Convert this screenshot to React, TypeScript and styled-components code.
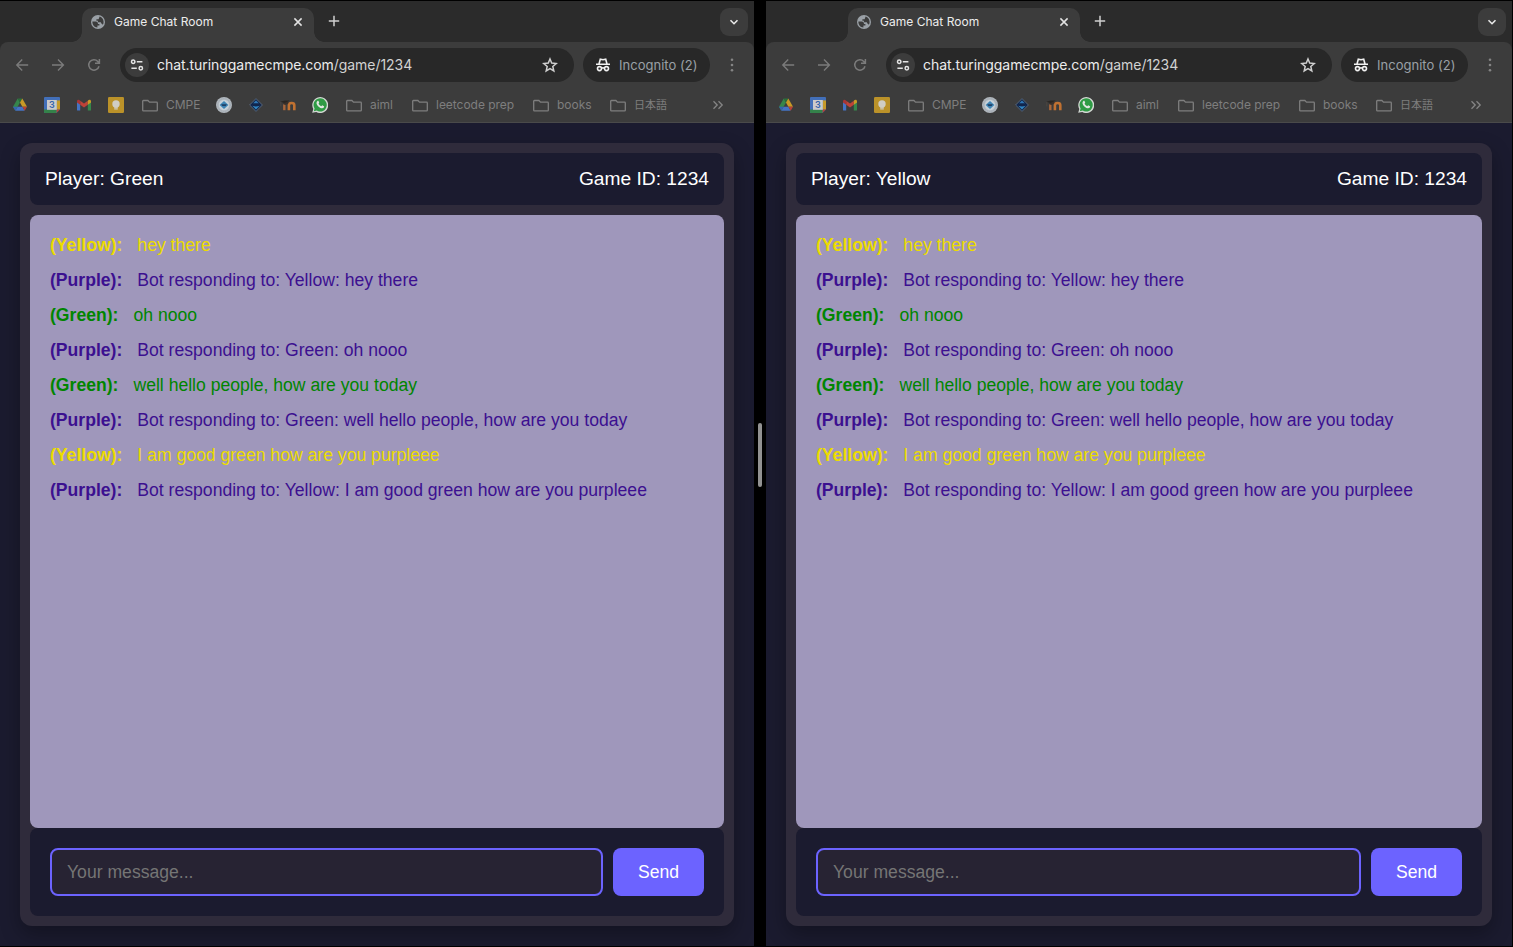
import React from 'react';
import styled, { createGlobalStyle } from 'styled-components';

const Global = createGlobalStyle`
  *, *::before, *::after { box-sizing: border-box; }
  body { margin: 0; background: #000; overflow: hidden; }
`;

const Desktop = styled.div`
  display: flex;
  width: 1513px;
  height: 947px;
  padding: 1px 1px 0 0;
  background: #000;
`;

const Divider = styled.div`
  width: 12px;
  display: flex;
  justify-content: center;
  padding-top: 422px;
`;

const Grip = styled.div`
  width: 4px;
  height: 64px;
  border-radius: 2px;
  background: #929292;
`;

const Window = styled.div<{ $width: number }>`
  width: ${(p) => p.$width}px;
  height: 945px;
  display: flex;
  flex-direction: column;
  background: #1b1b2f;
  overflow: hidden;
  font-family: Inter, 'Noto Sans CJK JP', sans-serif;
`;

const TabStrip = styled.div`
  height: 41px;
  flex: none;
  display: flex;
  padding: 7px 6px 0 82px;
  background: #2b2b2b;
`;

const Tab = styled.div`
  position: relative;
  width: 232px;
  height: 34px;
  padding: 0 10px 6px 9px;
  display: flex;
  align-items: center;
  border-radius: 10px 10px 0 0;
  background: #3c3c3c;

  &::before,
  &::after {
    content: '';
    position: absolute;
    bottom: 0;
    width: 10px;
    height: 10px;
  }
  &::before {
    left: -10px;
    background: radial-gradient(circle at 0 0, transparent 9.5px, #3c3c3c 10px);
  }
  &::after {
    right: -10px;
    background: radial-gradient(circle at 100% 0, transparent 9.5px, #3c3c3c 10px);
  }
`;

const TabTitle = styled.span`
  flex: 1;
  margin-left: 9px;
  font-size: 12px;
  line-height: 16px;
  letter-spacing: 0.02px;
  color: #ececec;
  white-space: nowrap;
`;

const NewTab = styled.div`
  flex: 1;
  padding: 7px 0 0 14px;
  svg { display: block; }
`;

const TabSearch = styled.div`
  width: 28px;
  height: 28px;
  display: grid;
  place-items: center;
  border-radius: 9px;
  background: #3c3c3c;
`;

const ToolbarBack = styled.div`
  flex: none;
  background: #2b2b2b;
`;

const Chrome = styled.div`
  height: 81px;
  border-radius: 8px 8px 0 0;
  background: #3c3c3c;
  border-bottom: 1px solid #4a4a4a;
`;

const NavRow = styled.div`
  display: flex;
  align-items: center;
  height: 46px;
  padding: 0 14px;
`;

const NavIcons = styled.div`
  display: flex;
  gap: 20px;
  width: 106px;
  svg { display: block; }
`;

const AddressBar = styled.div`
  flex: 1;
  height: 34px;
  display: flex;
  align-items: center;
  padding: 0 15px 0 5px;
  border-radius: 17px;
  background: #282828;
`;

const SiteInfo = styled.div`
  width: 24px;
  height: 24px;
  display: grid;
  place-items: center;
  border-radius: 50%;
  background: #3c3c3c;
`;

const Url = styled.span`
  flex: 1;
  margin-left: 8px;
  font-size: 14px;
  line-height: 20px;
  letter-spacing: -0.05px;
  color: #ececec;
  white-space: nowrap;
  span { color: #d2d2d2; }
`;

const IncognitoPill = styled.div`
  width: 127px;
  height: 34px;
  margin: 0 14px 0 9px;
  padding-left: 12px;
  display: flex;
  align-items: center;
  gap: 8px;
  border-radius: 17px;
  background: #282828;
  color: #9aa0a6;
  font-size: 13px;
  letter-spacing: 0.02px;
  white-space: nowrap;
`;

const Bookmarks = styled.div`
  display: flex;
  align-items: center;
  height: 34px;
  padding: 0 30px 0 12px;
`;

const Favicon = styled.div`
  width: 16px;
  height: 16px;
  margin-right: 16px;
  svg { display: block; }
`;

const Folder = styled.div<{ $width: number }>`
  width: ${(p) => p.$width}px;
  flex: none;
  display: flex;
  align-items: center;
  gap: 7px;
  padding: 0 0 1px 2px;
  font-size: 12px;
  line-height: 15px;
  letter-spacing: -0.03px;
  color: #7e7e7e;
  white-space: nowrap;
  svg { flex: none; position: relative; top: 1px; }
`;

const Japanese = styled.span`
  font: 11px/15px 'Noto Sans CJK JP', sans-serif;
`;

const More = styled.div`
  margin-left: auto;
  svg { display: block; }
`;

const Page = styled.div`
  flex: 1;
  padding: 20px 20px 20px;
  background: #1b1b2f;
  font-family: 'Liberation Sans', Arial, sans-serif;
`;

const Card = styled.div`
  height: 783px;
  display: flex;
  flex-direction: column;
  padding: 10px;
  border-radius: 12px;
  background: #2f2b3b;
  box-shadow: 0 8px 20px rgba(0, 0, 0, 0.3);
`;

const Header = styled.div`
  height: 52px;
  display: flex;
  align-items: center;
  justify-content: space-between;
  margin-bottom: 10px;
  padding: 0 15px;
  border-radius: 8px;
  background: #1b1b2f;
  color: #fff;
  font-size: 19.2px;
`;

const Messages = styled.div`
  height: 613px;
  padding: 20px;
  border-radius: 8px;
  background: #9f97bb;
`;

const Line = styled.div<{ $color: string }>`
  height: 20px;
  margin-bottom: 15px;
  font-size: 17.6px;
  line-height: 20px;
  color: ${(p) => p.$color};
  white-space: nowrap;
  strong { margin-right: 15px; }
`;

const Composer = styled.div`
  height: 88px;
  display: flex;
  gap: 10px;
  padding: 20px;
  border-radius: 8px;
  background: #1b1b2f;
`;

const Input = styled.input`
  flex: 1;
  min-width: 0;
  height: 48px;
  padding: 0 15px;
  border: 2px solid #6c63ff;
  border-radius: 8px;
  background: #272333;
  font: 17.6px 'Liberation Sans', Arial, sans-serif;
  outline: none;
  &::placeholder { color: #757575; opacity: 1; }
`;

const Send = styled.button`
  width: 91px;
  height: 48px;
  border: 0;
  border-radius: 8px;
  background: #6c63ff;
  color: #fff;
  font: 17.6px 'Liberation Sans', Arial, sans-serif;
`;

const GlobeIcon = () => (
  <svg width="14" height="14" viewBox="0 0 14 14">
    <circle cx="7" cy="7" r="7" fill="#9aa0a6" />
    <path
      d="M1.4 6.4 4.6 6.6C6.4 6.7 7 7.6 7 9H8.4V10.6H6.4V12.4C3.4 12.3 1.2 9.7 1.4 6.4ZM8.6 1.6C11 2.3 12.6 4.4 12.6 7c0 1-.2 1.9-.7 2.7L10.4 8.6 9.8 7.2H6.9V5.8H5.4V4.3H7.6Z"
      fill="#3c3c3c"
    />
  </svg>
);

const CloseIcon = () => (
  <svg width="12" height="12" viewBox="0 0 12 12" stroke="#e3e3e3" strokeWidth="1.5">
    <path d="m2.4 2.4 7.2 7.2M9.6 2.4 2.4 9.6" />
  </svg>
);

const PlusIcon = () => (
  <svg width="12" height="12" viewBox="0 0 12 12" stroke="#d0d0d0" strokeWidth="1.5">
    <path d="M6 .8v10.4M.8 6h10.4" />
  </svg>
);

const ChevronIcon = () => (
  <svg width="10" height="10" viewBox="0 0 10 10" fill="none" stroke="#e8e8e8" strokeWidth="1.6">
    <path d="m1.5 3.2 3.5 3.5 3.5-3.5" />
  </svg>
);

const ArrowIcon = ({ flip = false }: { flip?: boolean }) => (
  <svg width="16" height="16" viewBox="0 0 16 16" fill="none" stroke="#7b7b7b" strokeWidth="1.4">
    <path d={flip ? 'M2 8h11.3M8 2.6 13.4 8 8 13.4' : 'M14.2 8H2.9M8.2 2.6 2.8 8l5.4 5.4'} />
  </svg>
);

const ReloadIcon = () => (
  <svg width="16" height="16" viewBox="0 0 16 16" fill="none" stroke="#7b7b7b" strokeWidth="1.5">
    <path d="M13 9.2A5.2 5.2 0 1 1 11.8 4.4L13.3 6M13.4 2v4.3H9" />
  </svg>
);

const TuneIcon = () => (
  <svg width="14" height="14" viewBox="0 0 14 14" fill="none" stroke="#e3e3e3" strokeWidth="1.5">
    <circle cx="3.2" cy="3.7" r="1.7" />
    <path d="M6.8 3.7h5.6M1.4 10.3h5.4" />
    <circle cx="10.8" cy="10.3" r="1.7" />
  </svg>
);

const StarIcon = () => (
  <svg width="18" height="18" viewBox="0 0 18 18" fill="none" stroke="#d0d0d0" strokeWidth="1.5">
    <path d="m9 3 1.7 4.1 4.5.4-3.4 3 1 4.4L9 12.6l-3.8 2.3 1-4.4-3.4-3 4.5-.4Z" />
  </svg>
);

const IncognitoIcon = () => (
  <svg width="16" height="16" viewBox="0 0 16 16" fill="none" stroke="#f1f1f1" strokeWidth="1.6">
    <path d="M1 7.2h14M4 7 5.3 2.2 8 2.8l2.7-.6L12 7" />
    <circle cx="4.5" cy="11.6" r="2" />
    <circle cx="11.5" cy="11.6" r="2" />
    <path d="M6.5 11.2c1-.6 2-.6 3 0" />
  </svg>
);

const DotsIcon = () => (
  <svg width="16" height="16" viewBox="0 0 16 16" fill="#858585">
    <circle cx="8" cy="2.7" r="1.3" />
    <circle cx="8" cy="8" r="1.3" />
    <circle cx="8" cy="13.3" r="1.3" />
  </svg>
);

const FolderIcon = () => (
  <svg width="17" height="14" viewBox="0 0 17 14" fill="none" stroke="#7e7e7e" strokeWidth="1.3">
    <path d="M1.4 1.5h4.5L7.5 3.2h7.1q.7 0 .7.7v7.3q0 .7-.7.7H1.4q-.7 0-.7-.7V2.2q0-.7.7-.7Z" />
  </svg>
);

const MoreIcon = () => (
  <svg width="12" height="12" viewBox="0 0 12 12" fill="none" stroke="#858585" strokeWidth="1.3">
    <path d="m1.5 2.3 3.7 3.7-3.7 3.7M6.5 2.3l3.7 3.7-3.7 3.7" />
  </svg>
);

const DriveIcon = () => (
  <svg width="16" height="16" viewBox="0 0 16 16">
    <path d="M5.7 1.5 1 9.8l2.3 4L5.6 9.8 8 5.5Z" fill="#35864b" />
    <path d="M5.7 1.5h4.6L8 5.5Z" fill="#287039" />
    <path d="M10.3 1.5 15 9.8h-4.6L8 5.5Z" fill="#c99a26" />
    <path d="M3.3 13.8 5.6 9.8h4.8l2.3 4Z" fill="#4473c4" />
    <path d="M10.4 9.8H15l-2.3 4Z" fill="#b84237" />
    <path d="M1 9.8h4.6l-2.3 4Z" fill="#3564b0" />
  </svg>
);

const DayText = styled.text`
  font: 600 9px Inter, sans-serif;
  fill: #3464ad;
`;

const CalendarIcon = () => (
  <svg width="16" height="16" viewBox="0 0 16 16">
    <rect width="16" height="16" rx="1" fill="#426fb9" />
    <path d="M12.6 3.4H16v9.2h-3.4Z" fill="#c69b29" />
    <path d="M0 12.6h12.6V16H1q-1 0-1-1Z" fill="#34824a" />
    <path d="M12.6 12.6H16L12.6 16Z" fill="#b84237" />
    <path d="M16 12.6V16h-3.4Z" fill="#3c3c3c" />
    <rect x="3" y="3" width="9.8" height="9.8" fill="#cbcbcb" />
    <DayText x="5.1" y="11.2">3</DayText>
  </svg>
);

const GmailIcon = () => (
  <svg width="16" height="16" viewBox="0 0 16 16">
    <path d="M1 4.5V13q0 .6.6.6h2.6V7Z" fill="#4473c4" />
    <path d="M15 4.5V13q0 .6-.6.6h-2.6V7Z" fill="#35864b" />
    <path d="M4.2 3.7 8 6.6l3.8-2.9v4.1L8 10.6 4.2 7.8Z" fill="#be4238" />
    <path d="M1 4.3c0-1.7 1.8-2.2 3.2-.6v4.1L1 5.4Z" fill="#a83535" />
    <path d="M15 4.3c0-1.7-1.8-2.2-3.2-.6v4.1L15 5.4Z" fill="#c99a26" />
  </svg>
);

const KeepIcon = () => (
  <svg width="16" height="16" viewBox="0 0 16 16">
    <rect width="16" height="16" rx="1.2" fill="#bb9229" />
    <circle cx="8" cy="7" r="3.7" fill="#d0cdc4" />
    <path d="M6.2 9h3.6v1.7H6.2ZM6.2 11.3h3.6v1.2H6.2Z" fill="#d0cdc4" />
  </svg>
);

const SealIcon = () => (
  <svg width="16" height="16" viewBox="0 0 16 16">
    <circle cx="8" cy="8" r="8" fill="#b0b6bc" />
    <circle cx="8" cy="8" r="6.4" fill="none" stroke="#9aa8b4" strokeWidth=".8" strokeDasharray="1 1" />
    <circle cx="8" cy="8" r="5.2" fill="#c6d0d8" />
    <path d="M8 4 12.4 8 8 12 3.6 8Z" fill="#3d84b4" />
    <path d="M5.2 7.2h5.6L9.6 9H6.4Z" fill="#203f65" />
  </svg>
);

const DiamondIcon = () => (
  <svg width="16" height="16" viewBox="0 0 16 16">
    <path d="m8 1.6 6.4 6.4L8 14.4 1.6 8Z" fill="#14284c" stroke="#6b7c90" strokeWidth=".7" />
    <path d="M8 3.6 11 6.6H5Z" fill="#2f78b8" />
    <path d="M3.6 7.6 5 6.4h6l1.4 1.2L10 9.4H6Z" fill="#11254c" />
    <path d="M4.4 8.8c2.4 1 4.8 1 7.2 0L8 12.6Z" fill="#3187c4" />
  </svg>
);

const MoodleIcon = () => (
  <svg width="16" height="16" viewBox="0 0 16 16" fill="none">
    <path d="M4.3 13.2V7.4" stroke="#a9663a" strokeWidth="2.4" />
    <path d="M8.9 13.2V8.2c0-2.9 5.4-2.9 5.4 0v5" stroke="#c07131" strokeWidth="2.6" />
    <path d="M.3 4.8 4.6 3.4l5 .2-4.4 2.6Z" fill="#2a2622" />
    <path d="M.8 5v4.4" stroke="#554b42" strokeWidth=".7" />
    <path d="M3.1 6.2 8.3 4.6v1.8L5 7.9Z" fill="#3a3029" />
  </svg>
);

const WhatsAppIcon = () => (
  <svg width="16" height="16" viewBox="0 0 16 16">
    <path d="M.2 15.8 1.3 12A8 8 0 1 1 4.3 15Z" fill="#d4d8d4" />
    <path d="m1.8 14.3.8-2.8a6.6 6.6 0 1 1 2.2 2.1Z" fill="#2f9b45" />
    <path
      d="M5.4 4.1c.4-.4 1-.3 1.2.1l.6 1.4c.1.4-.4.8-.7 1.2.7 1.3 1.6 2 2.8 2.5l.9-1 1.8.9c.3.2.1 1-.2 1.4-.6.8-1.8 1-3.4.3-2-.9-3.5-2.7-3.8-4.1-.2-1.2.3-2.2.8-2.7Z"
      fill="#e2e6e2"
    />
  </svg>
);

const BrowserChrome = () => (
  <>
    <TabStrip>
      <Tab>
        <GlobeIcon />
        <TabTitle>Game Chat Room</TabTitle>
        <CloseIcon />
      </Tab>
      <NewTab><PlusIcon /></NewTab>
      <TabSearch><ChevronIcon /></TabSearch>
    </TabStrip>
    <ToolbarBack>
      <Chrome>
        <NavRow>
          <NavIcons>
            <ArrowIcon />
            <ArrowIcon flip />
            <ReloadIcon />
          </NavIcons>
          <AddressBar>
            <SiteInfo><TuneIcon /></SiteInfo>
            <Url>chat.turinggamecmpe.com<span>/game/1234</span></Url>
            <StarIcon />
          </AddressBar>
          <IncognitoPill><IncognitoIcon />Incognito (2)</IncognitoPill>
          <DotsIcon />
        </NavRow>
        <Bookmarks>
          <Favicon><DriveIcon /></Favicon>
          <Favicon><CalendarIcon /></Favicon>
          <Favicon><GmailIcon /></Favicon>
          <Favicon><KeepIcon /></Favicon>
          <Folder $width={76}><FolderIcon />CMPE</Folder>
          <Favicon><SealIcon /></Favicon>
          <Favicon><DiamondIcon /></Favicon>
          <Favicon><MoodleIcon /></Favicon>
          <Favicon><WhatsAppIcon /></Favicon>
          <Folder $width={66}><FolderIcon />aiml</Folder>
          <Folder $width={121}><FolderIcon />leetcode prep</Folder>
          <Folder $width={77}><FolderIcon />books</Folder>
          <Folder $width={61}><FolderIcon /><Japanese>日本語</Japanese></Folder>
          <More><MoreIcon /></More>
        </Bookmarks>
      </Chrome>
    </ToolbarBack>
  </>
);

const COLORS: Record<string, string> = {
  Yellow: '#ecdc00',
  Purple: '#3c1090',
  Green: '#008500',
};

const MESSAGES: [string, string][] = [
  ['Yellow', 'hey there'],
  ['Purple', 'Bot responding to: Yellow: hey there'],
  ['Green', 'oh nooo'],
  ['Purple', 'Bot responding to: Green: oh nooo'],
  ['Green', 'well hello people, how are you today'],
  ['Purple', 'Bot responding to: Green: well hello people, how are you today'],
  ['Yellow', 'I am good green how are you purpleee'],
  ['Purple', 'Bot responding to: Yellow: I am good green how are you purpleee'],
];

const ChatWindow = ({ player, width }: { player: string; width: number }) => (
  <Window $width={width}>
    <BrowserChrome />
    <Page>
      <Card>
        <Header>
          <span>Player: {player}</span>
          <span>Game ID: 1234</span>
        </Header>
        <Messages>
          {MESSAGES.map(([who, text], i) => (
            <Line key={i} $color={COLORS[who]}>
              <strong>({who}):</strong>
              {text}
            </Line>
          ))}
        </Messages>
        <Composer>
          <Input placeholder="Your message..." />
          <Send>Send</Send>
        </Composer>
      </Card>
    </Page>
  </Window>
);

export default function App() {
  return (
    <>
      <Global />
      <Desktop>
        <ChatWindow player="Green" width={754} />
        <Divider><Grip /></Divider>
        <ChatWindow player="Yellow" width={746} />
      </Desktop>
    </>
  );
}
